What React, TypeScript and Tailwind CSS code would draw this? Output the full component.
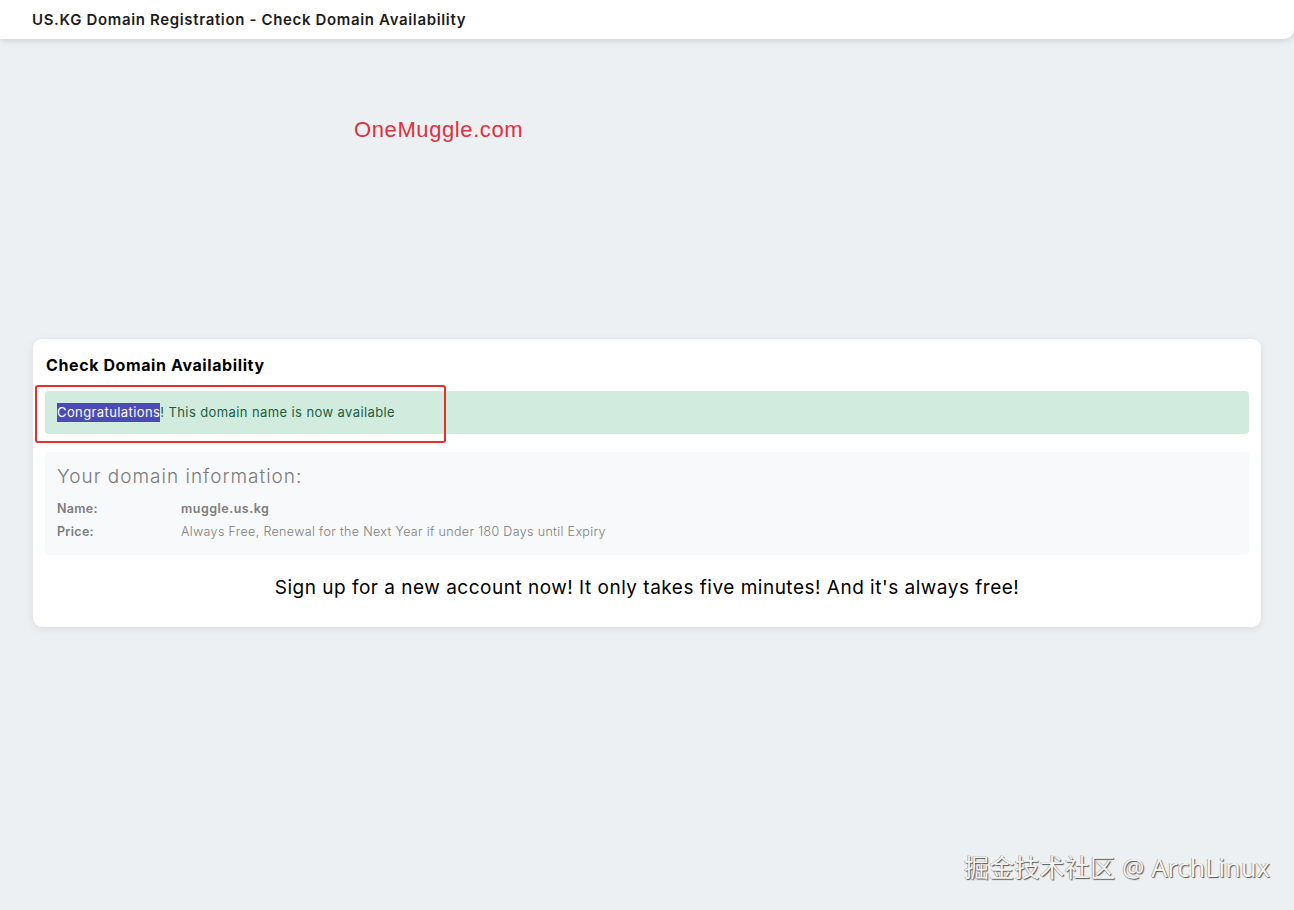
import React from 'react';

const font = { fontFamily: 'Inter, "Noto Sans", sans-serif' };

export default function App() {
  return (
    <div className="relative min-h-[910px] w-full bg-[#edf0f3] text-[#212529]" style={font}>
      {/* Top bar */}
      <header className="flex h-[39px] items-center rounded-br-[10px] bg-white px-8 shadow-[0_2px_6px_rgba(0,0,0,0.12)]">
        <h1 className="pt-px text-[15px] font-semibold tracking-[0.65px] text-[#1d1d22]">
          US.KG Domain Registration - Check Domain Availability
        </h1>
      </header>

      {/* Brand line */}
      <div className="flex h-[182px] items-start pl-[354px] pt-[74px]">
        <span
          className="text-[22px] tracking-[0.6px] text-[#e0313a]"
          style={{ fontFamily: '"Liberation Sans", Arial, sans-serif' }}
        >
          OneMuggle.com
        </span>
      </div>

      <main className="px-[33px] pt-[118px]">
        <section className="relative rounded-[9px] bg-white px-3 pb-[25px] pt-[14px] shadow-[0_2px_8px_rgba(0,0,0,0.08)]">
          <h2 className="ml-px text-[16px] leading-[24px] font-bold tracking-[0.6px] text-black">Check Domain Availability</h2>

          <div className="mt-[14px] flex h-[43px] items-center rounded-[4px] bg-[#d1ecdf] px-3 text-[13px] tracking-[0.4px] text-[#1b5e3f]">
            <span className="bg-[#4b4bb8] text-white">Congratulations</span>
            <span>! This domain name is now available</span>
          </div>

          {/* annotation box */}
          <div className="pointer-events-none absolute left-[2px] top-[46px] h-[58px] w-[411px] rounded-[3px] border-2 border-[#e3302b]" />

          <div className="mt-[18px] rounded-[4px] bg-[#f8f9fa] px-3 pb-[15px] pt-[11px]">
            <div className="text-[19px] leading-[28px] font-light tracking-[1px] text-[#7b7b7b]">Your domain information:</div>
            <div className="mt-[10px] grid grid-cols-[124px_1fr] gap-y-[7px] text-[12.5px] leading-[16px] text-[#7d7d7d]">
              <div className="font-semibold tracking-[0.3px]">Name:</div>
              <div className="font-semibold tracking-[0.5px]">muggle.us.kg</div>
              <div className="font-semibold tracking-[0.3px]">Price:</div>
              <div className="font-light tracking-[0.35px]">Always Free, Renewal for the Next Year if under 180 Days until Expiry</div>
            </div>
          </div>

          <p className="mt-[19px] text-center text-[19px] leading-[28px] tracking-[0.5px] text-black">
            Sign up for a new account now! It only takes five minutes! And it's always free!
          </p>
        </section>
      </main>

      {/* watermark */}
      <div
        className="absolute bottom-[24px] right-[24px] text-[25px] tracking-[0.2px] text-[#f4f4f4]"
        style={{
          fontFamily: '"Noto Sans", "Noto Sans CJK SC", sans-serif',
          textShadow: '1px 1px 1px #555, -0.5px -0.5px 0 #888',
        }}
      >
        掘金技术社区 @ ArchLinux
      </div>
    </div>
  );
}
